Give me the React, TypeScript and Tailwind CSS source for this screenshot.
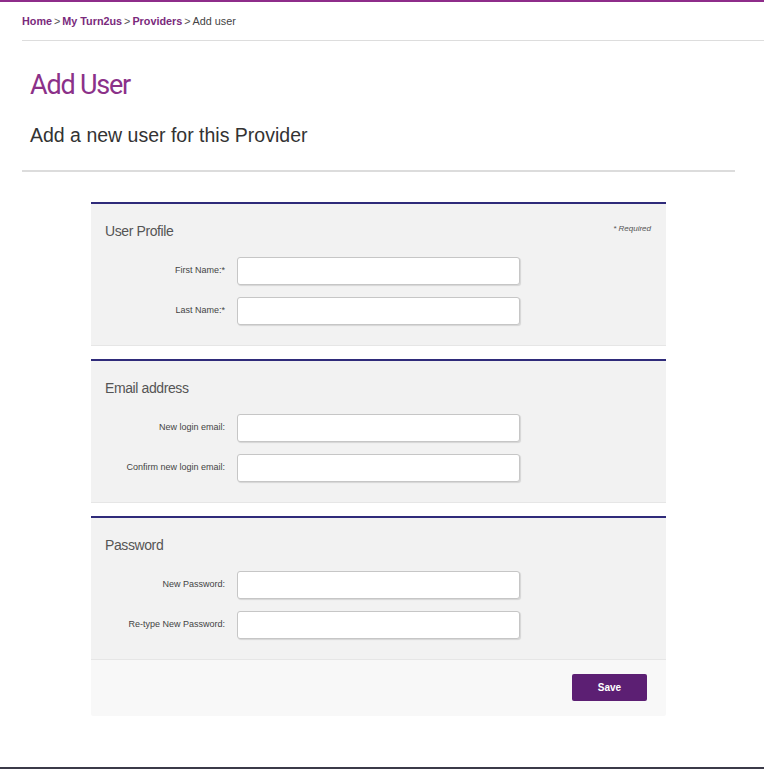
import React from "react";

type Field = { label: string; type?: string };

const sections: { title: string; fields: Field[]; required?: boolean }[] = [
  {
    title: "User Profile",
    required: true,
    fields: [{ label: "First Name:*" }, { label: "Last Name:*" }],
  },
  {
    title: "Email address",
    fields: [{ label: "New login email:" }, { label: "Confirm new login email:" }],
  },
  {
    title: "Password",
    fields: [
      { label: "New Password:", type: "password" },
      { label: "Re-type New Password:", type: "password" },
    ],
  },
];

const FormSection: React.FC<{ title: string; fields: Field[]; required?: boolean }> = ({
  title,
  fields,
  required,
}) => (
  <div className="border-t-2 border-[#2f2b7a] bg-[#f2f2f2] border-b border-b-[#e6e6e6]">
    {/* Heading */}
    <div className="flex items-center justify-between pl-[14px] pr-[15px] pt-[17px] h-[37px]">
      <h2 className="text-[14px] leading-[20px] text-[#555] tracking-[-0.4px]">{title}</h2>
      {required && (
        <span className="text-[8px] italic text-[#555] -mt-[4px]">* Required</span>
      )}
    </div>

    {/* Fields */}
    <div className="flex flex-col gap-[12px] pt-[16px] pb-[20px]">
      {fields.map((f) => (
        <div key={f.label} className="flex items-center">
          <label className="w-[134px] text-right text-[9px] text-[#444]">{f.label}</label>
          <input
            type={f.type || "text"}
            className="ml-[12px] w-[283px] h-[28px] bg-white border border-[#c6c6c6] rounded-[3px] shadow-[1px_1px_1px_rgba(0,0,0,0.12)]"
          />
        </div>
      ))}
    </div>
  </div>
);

const App: React.FC = () => {
  return (
    <div className="min-h-[769px] bg-white font-['Liberation_Sans',Arial,sans-serif]">
      {/* Top bar */}
      <div className="h-[2px] bg-[#8e2c8a]" />

      {/* Breadcrumb */}
      <div className="ml-[22px] h-[39px] flex items-center border-b border-[#dddddd] text-[10.8px]">
        <a className="font-bold text-[#7a2a7c]">Home</a>
        <span className="text-[#555] mx-[2px]">&gt;</span>
        <a className="font-bold text-[#7a2a7c]">My Turn2us</a>
        <span className="text-[#555] mx-[2px]">&gt;</span>
        <a className="font-bold text-[#7a2a7c]">Providers</a>
        <span className="text-[#555] mx-[2px]">&gt;</span>
        <span className="text-[#444]">Add user</span>
      </div>

      {/* Page header */}
      <div className="ml-[22px] mr-[29px] pl-[8px] pt-[29px] pb-[24px] border-b-2 border-[#dcdcdc]">
        <h1 className="text-[27px] leading-[30px] tracking-[-1.2px] text-[#8b3189] font-['Roboto',sans-serif]">
          Add User
        </h1>
        <p className="mt-[24px] text-[19.5px] leading-[22px] text-[#333]">
          Add a new user for this Provider
        </p>
      </div>

      {/* Form */}
      <div className="ml-[91px] w-[575px] mt-[30px] flex flex-col gap-[13px]">
        {sections.map((s) => (
          <FormSection key={s.title} {...s} />
        ))}
      </div>
      <div className="ml-[91px] w-[575px] -mt-[1px] bg-[#f8f8f8] border-t border-[#e0e0e0] flex justify-end pt-[14px] pb-[15px] pr-[19px] rounded-b-[2px]">
        <button className="w-[75px] h-[27px] bg-[#5c1f73] text-white text-[10px] font-bold rounded-[2px]">
          Save
        </button>
      </div>

      {/* Bottom line */}
      <div className="mt-[51px] h-[2px] bg-[#3b3a48]" />
    </div>
  );
};

export default App;
